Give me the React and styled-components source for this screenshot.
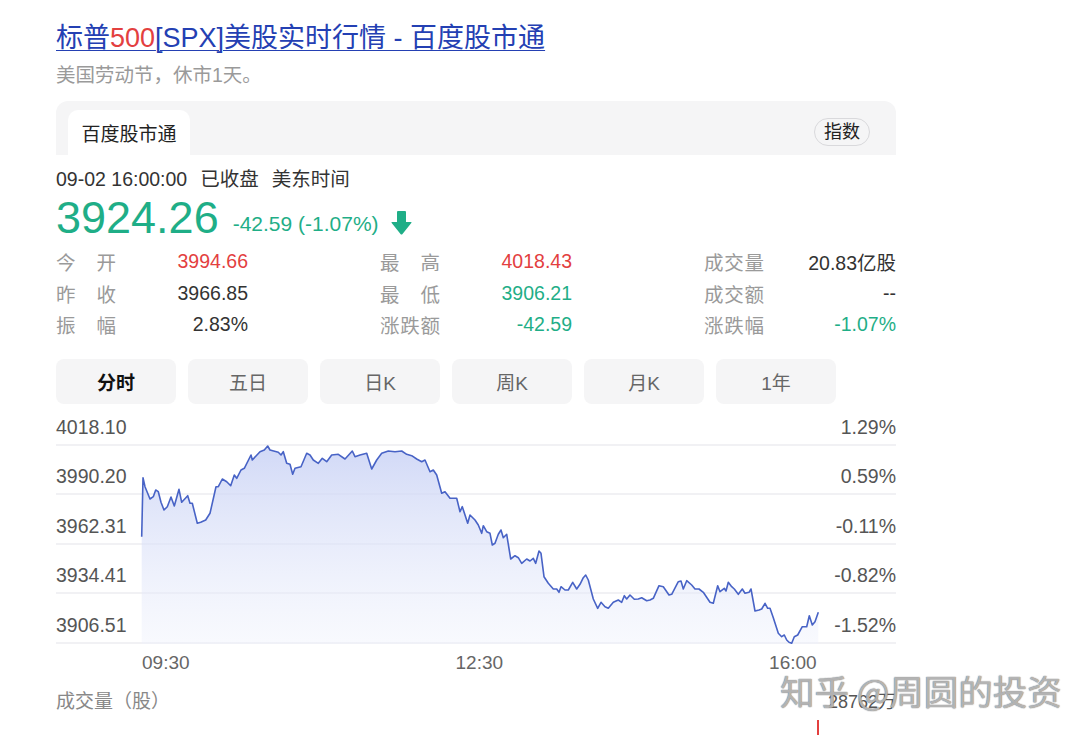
import styled, { createGlobalStyle } from 'styled-components'

const GlobalStyle = createGlobalStyle`
  body {
    margin: 0;
    background: #fff;
    font-family: "Liberation Sans", Arial, "Noto Sans CJK SC", sans-serif;
  }
`

const green = '#1fae87'
const red = '#e3403f'

const Page = styled.div`
  position: relative;
  width: 1088px;
  height: 735px;
  overflow: hidden;
  padding: 20px 0 0 56px;
  box-sizing: border-box;
`

const Main = styled.div`
  width: 840px;
`

const Title = styled.a`
  display: block;
  font-size: 27px;
  line-height: 36px;
  color: #2440b3;
  text-decoration: underline;
  text-underline-offset: 3px;
  text-decoration-thickness: 1px;
  white-space: nowrap;
`

const Red = styled.span`
  color: ${red};
`

const Sub = styled.div`
  margin-top: 6px;
  font-size: 19.5px;
  line-height: 26px;
  color: #9a9a9a;
`

const TabBar = styled.div`
  margin-top: 13px;
  height: 54px;
  background: #f5f5f6;
  border-radius: 12px 12px 0 0;
  display: flex;
  align-items: flex-end;
  justify-content: space-between;
  padding: 0 26px 0 12px;
`

const Tab = styled.div`
  width: 122px;
  height: 45px;
  background: #fff;
  border-radius: 10px 10px 0 0;
  display: flex;
  align-items: center;
  justify-content: center;
  font-size: 19px;
  color: #222;
`

const Pill = styled.div`
  align-self: center;
  margin-top: 8px;
  height: 26px;
  padding: 0 9px;
  border: 1px solid #d9d9dc;
  border-radius: 14px;
  font-size: 18px;
  line-height: 26px;
  color: #222;
`

const TimeRow = styled.div`
  margin-top: 10px;
  font-size: 19.5px;
  line-height: 28px;
  color: #333;
  display: flex;
  gap: 13px;
`

const PriceRow = styled.div`
  display: flex;
  align-items: center;
  height: 50px;
`

const Price = styled.div`
  font-size: 45px;
  line-height: 50px;
  color: ${green};
`

const Change = styled.div`
  margin: 12px 0 0 14px;
  font-size: 21px;
  color: ${green};
`

const Arrow = styled.svg`
  margin: 10px 0 0 12px;
`

const Stats = styled.div`
  margin-top: 3px;
  display: grid;
  grid-template-columns: repeat(3, 192px);
  column-gap: 132px;
  grid-auto-rows: 31.5px;
`

const Cell = styled.div`
  display: flex;
  align-items: center;
  justify-content: space-between;
  font-size: 19.5px;
`

const Label = styled.div`
  width: 60px;
  display: flex;
  justify-content: space-between;
  color: #9a9a9a;
`

const Value = styled.div`
  color: ${p => p.$c || '#333'};
`

const Periods = styled.div`
  margin-top: 18px;
  display: flex;
  gap: 12px;
`

const Period = styled.div`
  width: 120px;
  height: 45px;
  border-radius: 8px;
  background: #f5f5f6;
  display: flex;
  align-items: center;
  justify-content: center;
  font-size: 19px;
  color: ${p => (p.$on ? '#111' : '#666')};
  font-weight: ${p => (p.$on ? 'bold' : 'normal')};
`

const Chart = styled.div`
  position: relative;
  margin-top: 2px;
`

const GridRow = styled.div`
  height: ${p => (p.$first ? 40 : 49.5)}px;
  box-sizing: border-box;
  display: flex;
  align-items: flex-end;
  justify-content: space-between;
  padding-bottom: 5px;
  border-bottom: 2px solid #f1f1f4;
  font-size: 19.5px;
  line-height: 24px;
  color: #555;
`

const Curve = styled.svg`
  position: absolute;
  left: 0;
  top: 0;
`

const Axis = styled.div`
  margin-top: 7px;
  padding-left: 86px;
  display: flex;
  gap: 266px;
  font-size: 19px;
  line-height: 24px;
  color: #666;
`

const VolRow = styled.div`
  margin-top: 14px;
  display: flex;
  justify-content: space-between;
  font-size: 19px;
  line-height: 26px;
  color: #888;
`

const VolValue = styled.span`
  font-size: 18px;
  color: #555;
`

const VolBar = styled.div`
  margin: 5px 0 0 761px;
  width: 2px;
  height: 16px;
  background: ${red};
`

const Watermark = styled.div`
  position: absolute;
  left: 780px;
  top: 669px;
  font-size: 34.5px;
  line-height: 42px;
  white-space: nowrap;
  color: rgba(250, 250, 250, 0.55);
  text-shadow: 0 0 1px rgba(90, 90, 90, 0.8), 0 0 1px rgba(90, 90, 90, 0.8);
  font-family: "Noto Sans CJK SC", sans-serif;
`

let points = [
  [141.7, 536.7], [143, 477.7], [145, 486.7], [150, 499], [153.3, 496.7], [155.7, 490], [158.3, 491.7],
  [161, 502.3], [164, 510], [167.3, 506.7], [171, 497], [174.3, 506], [179, 489.3], [181.7, 502.3],
  [187.7, 495.7], [190, 503.3], [192.3, 503.3], [197.3, 523.3], [200.7, 522.3], [205.7, 520], [210, 513.3],
  [216, 486.7], [218.3, 486.7], [222.3, 479], [226.7, 481.7], [230.7, 485.7], [234.3, 475], [236.7, 478.3],
  [241, 470], [244.3, 468.3], [251, 455], [252.3, 460], [260, 451.7], [264.3, 450], [267.7, 446], [270, 450],
  [278.3, 452.3], [281, 455], [283.3, 451.7], [286.7, 463.3], [290, 464.3], [292.7, 474.3], [295, 468.3],
  [301, 466.7], [306.7, 453.3], [310, 455], [313.3, 460], [318.3, 463.3], [322.3, 458.3], [326.7, 461.7],
  [331.7, 455], [338.3, 454.3], [345, 459], [352.3, 451], [355, 456.7], [360, 455], [366.7, 453.3],
  [371.7, 469], [376.7, 460], [381.7, 453.3], [388.3, 451], [395, 451.7], [401.7, 451], [406.7, 454.3],
  [411.7, 455.7], [416.7, 459], [421.7, 461.7], [425, 460], [430, 471.7], [433.3, 470], [436.7, 475],
  [441.7, 493.3], [445, 491.7], [450, 498.3], [456.7, 498.3], [460, 511.7], [462.3, 506.7], [467.7, 523.3],
  [470, 515], [475, 520], [478.3, 525], [481.7, 533.3], [483.3, 525.7], [486.7, 531.7], [490, 533.3],
  [492.3, 545], [495, 543.3], [498.3, 534.3], [501, 530], [503.3, 537.7], [506.7, 534.3], [510.7, 559],
  [515, 555.7], [518.3, 557.7], [521.7, 563.3], [526.7, 559], [530, 561], [533.3, 558.3], [535.7, 563.3],
  [539, 551], [541, 553.3], [544, 576.7], [548.3, 583.3], [553.3, 589], [556.7, 589], [559, 592.3],
  [561, 586.7], [565, 590], [568.3, 590], [572.7, 582.3], [576.7, 589], [580, 584.3], [583.3, 577.7],
  [585.7, 575], [588.3, 580], [593.3, 599], [597.7, 608.3], [601, 602.3], [605, 606.7], [608.3, 608.3],
  [613.3, 602.3], [618.3, 600], [621.7, 602.3], [624.3, 595.7], [626.7, 599], [630, 595], [634.3, 599.3],
  [638.3, 599], [641.7, 597.7], [646.7, 600.7], [650, 600], [653.3, 598.3], [659, 585.7], [663.3, 586.7],
  [669, 595], [671.7, 594.3], [678.3, 581.7], [681, 581], [683.3, 589], [686.7, 580.7], [691.7, 585],
  [695, 589], [699, 589], [703.3, 592.3], [710, 602.3], [713.3, 603.3], [717.7, 585.7], [720, 591.7],
  [724.3, 588.3], [726, 591], [728.3, 582.3], [731.7, 586.7], [734.3, 589], [738.3, 594.3], [742.3, 589],
  [745, 593.3], [749, 592.3], [751, 589], [755, 611], [759, 610], [761.7, 609], [765, 603.3], [767.7, 608.3],
  [770, 608.3], [773.3, 617.7], [778.3, 633.3], [781.7, 636.7], [784.3, 635], [786.7, 640], [789, 642.3],
  [791.7, 643.3], [794.3, 636.7], [797.7, 635], [802.3, 626.7], [806.7, 626.7], [809.3, 615.7],
  [812.3, 625], [815, 621.7], [818.3, 612.3],
]

let line = points.map((p, i) => (i ? 'L' : 'M') + p[0] + ' ' + p[1]).join(' ')
let area = line + ' L818.3 644 L141.7 644 Z'

let stats = [
  ['今开', '3994.66', red], ['最高', '4018.43', red], ['成交量', '20.83亿股'],
  ['昨收', '3966.85'], ['最低', '3906.21', green], ['成交额', '--'],
  ['振幅', '2.83%'], ['涨跌额', '-42.59', green], ['涨跌幅', '-1.07%', green],
]

let grid = [
  ['4018.10', '1.29%'],
  ['3990.20', '0.59%'],
  ['3962.31', '-0.11%'],
  ['3934.41', '-0.82%'],
  ['3906.51', '-1.52%'],
]

function App() {
  return (
    <Page>
      <GlobalStyle />
      <Main>
        <Title>标普<Red>500</Red>[SPX]美股实时行情 - 百度股市通</Title>
        <Sub>美国劳动节，休市1天。</Sub>
        <TabBar>
          <Tab>百度股市通</Tab>
          <Pill>指数</Pill>
        </TabBar>
        <TimeRow>
          <span>09-02 16:00:00</span>
          <span>已收盘</span>
          <span>美东时间</span>
        </TimeRow>
        <PriceRow>
          <Price>3924.26</Price>
          <Change>-42.59 (-1.07%)</Change>
          <Arrow width="21" height="24" viewBox="0 0 21 24">
            <path d="M6 1 Q6 0 7 0 H14 Q15 0 15 1 V11 H20 Q21 11 20.3 12 L11.3 23.2 Q10.5 24 9.7 23.2 L0.7 12 Q0 11 1 11 H6 Z" fill={green} />
          </Arrow>
        </PriceRow>
        <Stats>
          {stats.map(([k, v, c]) => (
            <Cell key={k}>
              <Label>{k.split('').map((ch, i) => <span key={i}>{ch}</span>)}</Label>
              <Value $c={c}>{v}</Value>
            </Cell>
          ))}
        </Stats>
        <Periods>
          {['分时', '五日', '日K', '周K', '月K', '1年'].map((t, i) => (
            <Period key={t} $on={i == 0}>{t}</Period>
          ))}
        </Periods>
        <Chart>
          {grid.map(([l, r], i) => (
            <GridRow key={l} $first={i == 0}>
              <span>{l}</span>
              <span>{r}</span>
            </GridRow>
          ))}
          <Curve width="840" height="240" viewBox="56 406 840 240">
            <defs>
              <linearGradient id="fill" x1="0" y1="0" x2="0" y2="1">
                <stop offset="0" stopColor="#c9d2f5" stopOpacity="0.85" />
                <stop offset="1" stopColor="#eef1fc" stopOpacity="0.4" />
              </linearGradient>
            </defs>
            <path d={area} fill="url(#fill)" />
            <path d={line} fill="none" stroke="#4863c6" strokeWidth="1.6" strokeLinejoin="round" />
          </Curve>
        </Chart>
        <Axis>
          <span>09:30</span>
          <span>12:30</span>
          <span>16:00</span>
        </Axis>
        <VolRow>
          <span>成交量（股）</span>
          <VolValue>28762万</VolValue>
        </VolRow>
        <VolBar />
      </Main>
      <Watermark>知乎 @周圆的投资</Watermark>
    </Page>
  )
}

export default App
